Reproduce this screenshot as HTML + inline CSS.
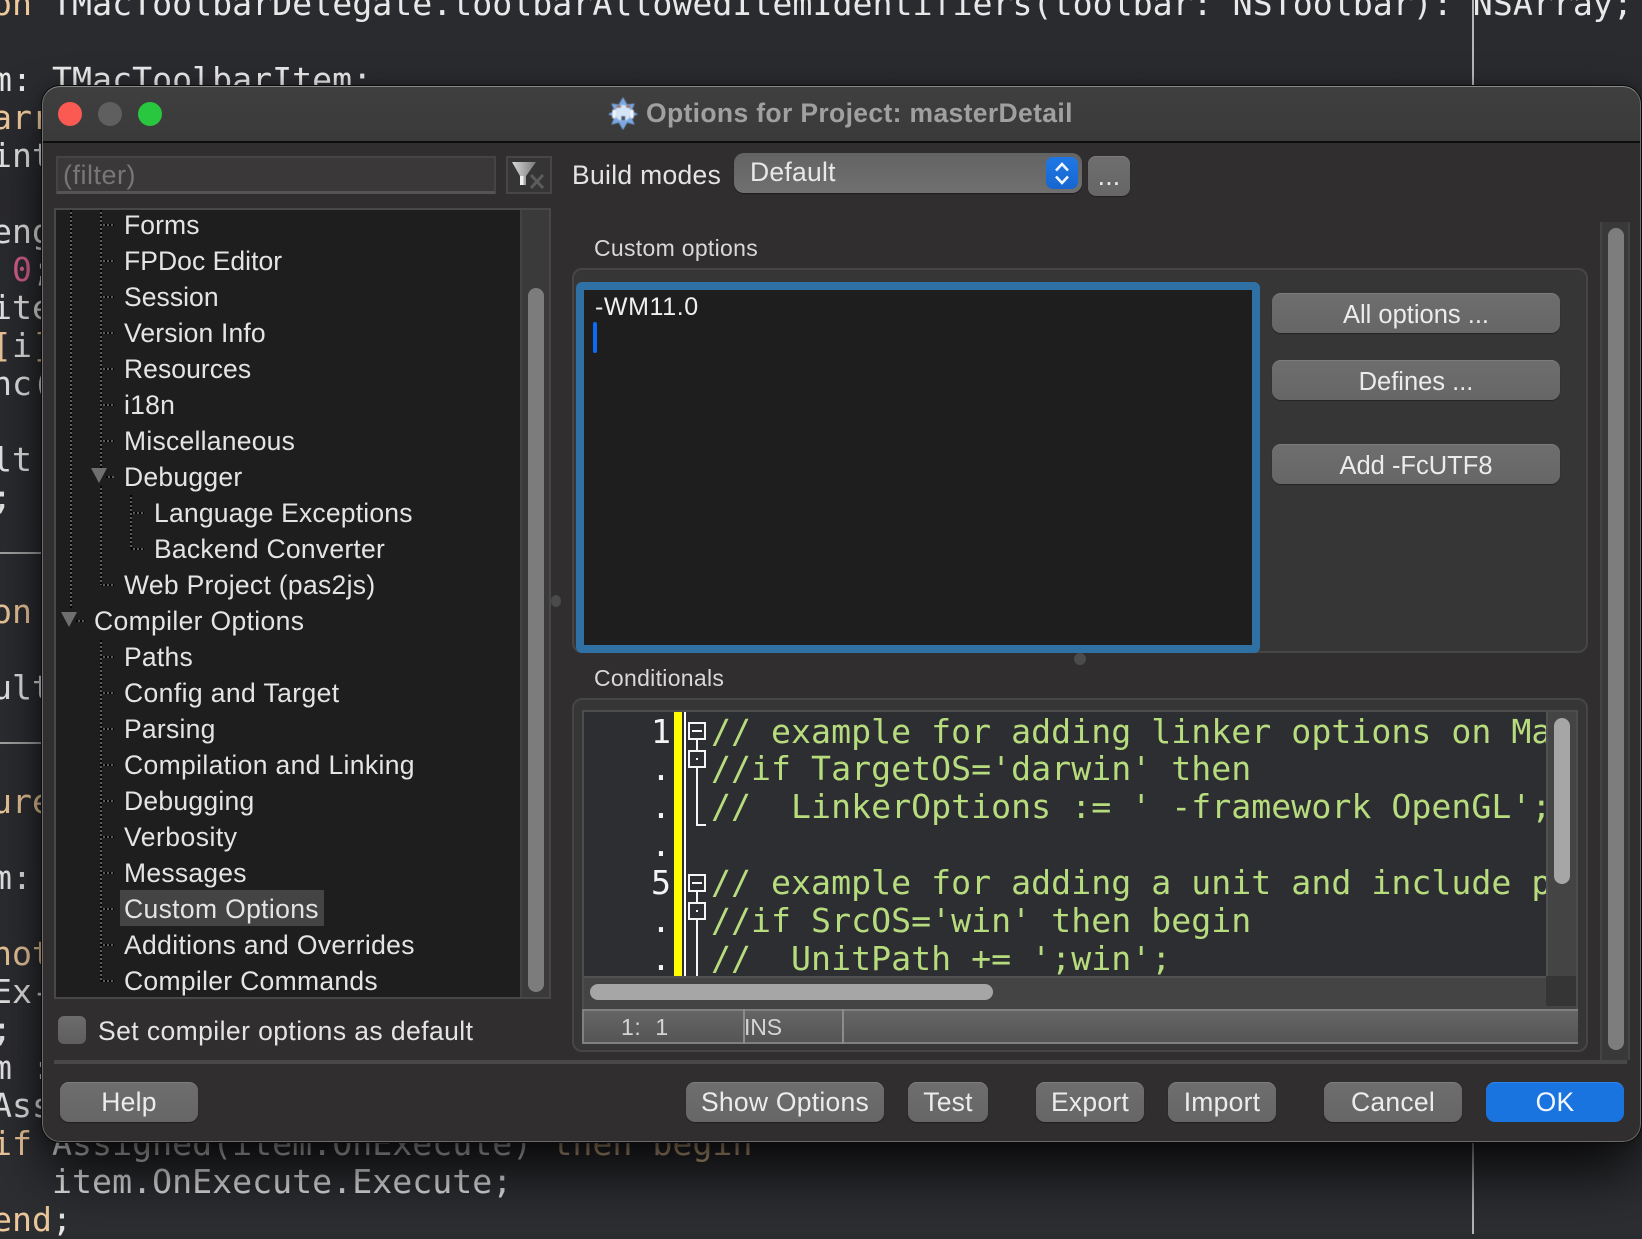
<!DOCTYPE html>
<html><head><meta charset="utf-8"><title>Options for Project: masterDetail</title>
<style>
html,body{margin:0;padding:0;width:1642px;height:1234px;overflow:hidden;background:#2b2c30}
*{box-sizing:border-box}
.a{position:absolute}
.bgc{position:absolute;left:0;top:0;width:1642px;height:1234px;background:linear-gradient(#2a2b2f,#2d2e32)}
pre{margin:0;font-family:"DejaVu Sans Mono","Liberation Mono",monospace;font-size:33.2px;letter-spacing:.03px;position:absolute}
.o{color:#efc99c}.p{color:#d9628f}
.t{position:absolute;white-space:pre;font-family:"Liberation Sans",Arial,sans-serif;font-size:26.5px;letter-spacing:.25px;color:#e4e4e4;height:36px;line-height:36px}
.btn{position:absolute;height:40px;line-height:40px;text-align:center;border-radius:9px;background:linear-gradient(#6e6e6e,#666);box-shadow:inset 0 1px 0 #7c7c7c,0 1px 1px rgba(0,0,0,.35);color:#ececec;font-family:"Liberation Sans",Arial,sans-serif;font-size:26.5px;letter-spacing:.25px;white-space:pre}
.b2{font-size:25.5px;letter-spacing:0;line-height:44px}
.grp{position:absolute;background:#363636;border:2px solid #464646;border-radius:10px}
.lab{position:absolute;white-space:pre;font-family:"Liberation Sans",Arial,sans-serif;font-size:23px;letter-spacing:.3px;color:#d9d9d9;height:30px;line-height:30px}
</style></head><body>
<div class="bgc"></div>
<pre style="left:-8px;top:-15.5px;line-height:38px;color:#e8e8e8"><span class="o">on</span> TMacToolbarDelegate.toolbarAllowedItemIdentifiers(toolbar: NSToolbar): NSArray;

m: TMacToolbarItem;
<span class="o">arr</span>
int

eng
 <span class="p">0</span>;
ite
<span class="o">[</span>i<span class="o">]</span>
nc(

lt
;


<span class="o">on</span>

ult


<span class="o">ure</span>

m:

<span class="o">not</span>
Ex-
;
m :
Ass
<span class="o">if</span> Assigned(item.OnExecute) <span class="o">then begin</span>
   item.OnExecute.Execute;
<span class="o">end</span>;</pre>
<div class="a" style="left:1472px;top:0;width:2px;height:1234px;background:#b5b5b5"></div>
<div class="a" style="left:0;top:552px;width:42px;height:2px;background:#a5a5a5"></div>
<div class="a" style="left:0;top:742px;width:42px;height:2px;background:#a5a5a5"></div>

<!-- window -->
<div class="a" style="left:42px;top:86px;width:1599px;height:1056px;border-radius:18px;background:#302e2f;box-shadow:0 0 0 1px #0b0b0b,0 34px 60px -4px rgba(0,0,0,.82),0 0 14px rgba(0,0,0,.3);overflow:hidden">
  <div class="a" style="left:0;top:0;right:0;height:57px;background:linear-gradient(#3f3f3f,#3a3a3a);border-bottom:2px solid #0d0d0d"></div>
  <div class="a" style="left:0;top:0;right:0;bottom:0;border-radius:18px;border:1.5px solid #6b6b6b;border-top-color:#8a8a8a"></div>
</div>

<!-- traffic lights -->
<div class="a" style="left:58px;top:102px;width:24px;height:24px;border-radius:50%;background:#fb5a53"></div>
<div class="a" style="left:98px;top:102px;width:24px;height:24px;border-radius:50%;background:#5f5f5f"></div>
<div class="a" style="left:138px;top:102px;width:24px;height:24px;border-radius:50%;background:#29c73f"></div>

<!-- title -->
<svg class="a" style="left:606px;top:96px" width="34" height="34" viewBox="0 0 32 32">
  <g style="filter:blur(.6px)">
  <polygon points="16,1 20,8 27,7 24,14 30,17 24,20 27,27 20,25 16,32 12,25 5,27 8,20 2,17 8,14 5,7 12,8" fill="#7ba8e2"/>
  <circle cx="16" cy="16" r="7.5" fill="#d6e4f7"/>
  <rect x="10" y="9" width="4" height="2" fill="#a06a60"/><rect x="19" y="9" width="4" height="2" fill="#a06a60"/>
  <rect x="14.5" y="19" width="3.5" height="4" fill="#44556e"/>
  <rect x="6" y="13" width="3" height="8" fill="#f3f7fd"/><rect x="23" y="13" width="3" height="8" fill="#f3f7fd"/>
  </g>
</svg>
<div class="t" style="left:646px;top:95px;font-weight:bold;font-size:26.5px;letter-spacing:.35px;color:#a0a0a0">Options for Project: masterDetail</div>

<!-- filter -->
<div class="a" style="left:56px;top:156px;width:440px;height:38px;background:#3a3839;border:2px solid #464445;border-bottom:3px solid #565556"></div>
<div class="t" style="left:63px;top:157px;color:#777;font-size:27px;letter-spacing:.5px">(filter)</div>
<div class="a" style="left:506px;top:156px;width:46px;height:38px;background:#363536;border:2px solid #484748"></div>
<svg class="a" style="left:506px;top:156px" width="46" height="38" viewBox="506 156 46 38">
  <defs><linearGradient id="f" x1="0" y1="0" x2="1" y2="0"><stop offset="0" stop-color="#d8d8d8"/><stop offset="1" stop-color="#7a7a7a"/></linearGradient></defs>
  <polygon points="512,162 536,162 526,176 526,185 520,185 520,176" fill="url(#f)"/>
  <rect x="520" y="176" width="3.5" height="9" fill="#f0f0f0"/>
  <path d="M531 175 L543 188 M543 175 L531 188" stroke="#5c5c5c" stroke-width="3" fill="none"/>
</svg>

<!-- tree -->
<div class="a" style="left:54px;top:208px;width:497px;height:791px;background:#3a3a3a;border:2px solid #484848"></div>
<div class="a" style="left:56px;top:210px;width:464px;height:787px;background:#1e1e1e"></div>
<div class="a" style="left:520px;top:210px;width:2px;height:787px;background:#434343"></div>
<div class="a" style="left:528px;top:288px;width:16px;height:704px;border-radius:8px;background:#7c7c7c"></div>
<div class="a" style="left:120px;top:890px;width:204px;height:36px;background:#444"></div>
<svg class="a" style="left:0;top:0" width="200" height="1000" viewBox="0 0 200 1000">
  <g fill="none" stroke-width="2" stroke-dasharray="2 2">
    <path stroke="#000" d="M71 210V608M101 210V468M101 486V585M131 495V548M101 640V981M101 225H114M101 261H114M101 297H114M101 333H114M101 369H114M101 405H114M101 441H114M106 477H114M131 513H144M131 549H144M101 585H114M76 621H85M101 657H114M101 693H114M101 729H114M101 765H114M101 801H114M101 837H114M101 873H114M101 909H114M101 945H114M101 981H114"/>
    <path stroke="#5a5a5a" stroke-dashoffset="2" d="M71 210V608M101 210V468M101 486V585M131 495V548M101 640V981M101 225H114M101 261H114M101 297H114M101 333H114M101 369H114M101 405H114M101 441H114M106 477H114M131 513H144M131 549H144M101 585H114M76 621H85M101 657H114M101 693H114M101 729H114M101 765H114M101 801H114M101 837H114M101 873H114M101 909H114M101 945H114M101 981H114"/>
  </g>
  <polygon points="91,468 107,468 99,483" fill="#6f6f6f"/>
  <polygon points="61,612 77,612 69,627" fill="#6f6f6f"/>
</svg>
<div class="t" style="left:124px;top:207px;letter-spacing:.1px">Forms</div>
<div class="t" style="left:124px;top:243px;letter-spacing:.05px">FPDoc Editor</div>
<div class="t" style="left:124px;top:279px;letter-spacing:.05px">Session</div>
<div class="t" style="left:124px;top:315px;letter-spacing:.15px">Version Info</div>
<div class="t" style="left:124px;top:351px;letter-spacing:.05px">Resources</div>
<div class="t" style="left:124px;top:387px">i18n</div>
<div class="t" style="left:124px;top:423px">Miscellaneous</div>
<div class="t" style="left:124px;top:459px">Debugger</div>
<div class="t" style="left:154px;top:495px;letter-spacing:.2px">Language Exceptions</div>
<div class="t" style="left:154px;top:531px;letter-spacing:.25px">Backend Converter</div>
<div class="t" style="left:124px;top:567px;letter-spacing:.3px">Web Project (pas2js)</div>
<div class="t" style="left:94px;top:603px;letter-spacing:.35px">Compiler Options</div>
<div class="t" style="left:124px;top:639px">Paths</div>
<div class="t" style="left:124px;top:675px;letter-spacing:.4px">Config and Target</div>
<div class="t" style="left:124px;top:711px">Parsing</div>
<div class="t" style="left:124px;top:747px;letter-spacing:.35px">Compilation and Linking</div>
<div class="t" style="left:124px;top:783px">Debugging</div>
<div class="t" style="left:124px;top:819px;letter-spacing:.5px">Verbosity</div>
<div class="t" style="left:124px;top:855px">Messages</div>
<div class="t" style="left:124px;top:891px;letter-spacing:.35px">Custom Options</div>
<div class="t" style="left:124px;top:927px;letter-spacing:.35px">Additions and Overrides</div>
<div class="t" style="left:124px;top:963px;letter-spacing:.3px">Compiler Commands</div>

<!-- checkbox -->
<div class="a" style="left:58px;top:1016px;width:28px;height:28px;border-radius:6px;background:linear-gradient(#6c6c6c,#5e5e5e)"></div>
<div class="t" style="left:98px;top:1013px;letter-spacing:.42px">Set compiler options as default</div>

<!-- build modes -->
<div class="t" style="left:572px;top:157px;letter-spacing:.3px">Build modes</div>
<div class="a" style="left:734px;top:153px;width:348px;height:40px;border-radius:10px;background:linear-gradient(#636363,#707070);box-shadow:0 1px 1px rgba(0,0,0,.4)"></div>
<div class="t" style="left:750px;top:154px;color:#e8e8e8">Default</div>
<div class="a" style="left:1046px;top:157px;width:32px;height:32px;border-radius:7px;background:linear-gradient(#1f78e6,#1766cf)"></div>
<svg class="a" style="left:1046px;top:157px" width="32" height="32" viewBox="1046 157 32 32">
  <path d="M1056 170.5L1062 164L1068 170.5M1056 176.5L1062 183L1068 176.5" fill="none" stroke="#f2f6fc" stroke-width="2.6"/>
</svg>
<div class="btn" style="left:1088px;top:156px;width:42px;border-radius:8px">...</div>

<!-- right scrollbar -->
<div class="a" style="left:1600px;top:222px;width:30px;height:838px;background:#3a3939;border-left:2px solid #454445;border-right:2px solid #454445"></div>
<div class="a" style="left:1608px;top:228px;width:16px;height:822px;border-radius:8px;background:#7d7d7d"></div>

<!-- custom options group -->
<div class="lab" style="left:594px;top:233px">Custom options</div>
<div class="grp" style="left:572px;top:268px;width:1016px;height:385px"></div>
<div class="a" style="left:576px;top:282px;width:684px;height:371px;background:#1e1e1e;border:8px solid #2f71a5;border-radius:6px"></div>
<div class="t" style="left:595px;top:289px;font-size:25px;letter-spacing:.6px;color:#f0f0f0">-WM11.0</div>
<div class="a" style="left:593px;top:322px;width:4px;height:31px;border-radius:2px;background:#0a6cf5"></div>
<div class="btn b2" style="left:1272px;top:293px;width:288px">All options ...</div>
<div class="btn b2" style="left:1272px;top:360px;width:288px">Defines ...</div>
<div class="btn b2" style="left:1272px;top:444px;width:288px">Add -FcUTF8</div>
<div class="a" style="left:1074px;top:653px;width:12px;height:12px;border-radius:50%;background:#4b4b4b"></div>
<div class="a" style="left:551px;top:595px;width:10px;height:12px;border-radius:50%;background:#4b4b4b"></div>

<!-- conditionals group -->
<div class="lab" style="left:594px;top:663px">Conditionals</div>
<div class="grp" style="left:572px;top:698px;width:1016px;height:354px"></div>
<div class="a" style="left:582px;top:710px;width:996px;height:299px;background:#454445;border:2px solid #4e4d4e;border-bottom:0"></div>
<div class="a" style="left:584px;top:712px;width:962px;height:264px;background:#2d2e32;overflow:hidden">
  <pre style="left:47px;top:.5px;width:40px;text-align:right;line-height:37.9px;color:#f4f4f4">1
.
.
.
5
.
.</pre>
  <div class="a" style="left:90px;top:0;width:8px;height:264px;background:#ffff00"></div>
  <div class="a" style="left:100px;top:0;width:2px;height:264px;background:#fff"></div>
  <svg class="a" style="left:0;top:0" width="140" height="264" viewBox="584 712 140 264">
    <g fill="none" stroke="#f5f5f5" stroke-width="2">
      <rect x="689" y="723" width="16" height="16"/><path d="M692 731H702" />
      <rect x="689" y="751" width="16" height="16"/><path d="M696 759H698"/>
      <path d="M697 739V751M697 767V825H706"/>
      <rect x="689" y="875" width="16" height="16"/><path d="M692 883H702"/>
      <rect x="689" y="903" width="16" height="16"/><path d="M696 911H698"/>
      <path d="M697 891V903M697 919V976"/>
    </g>
  </svg>
  <pre style="left:127px;top:.5px;line-height:37.9px;color:#b7dc7d">// example for adding linker options on Mac
//if TargetOS='darwin' then
//  LinkerOptions := ' -framework OpenGL';

// example for adding a unit and include path
//if SrcOS='win' then begin
//  UnitPath += ';win';</pre>
</div>
<div class="a" style="left:1546px;top:712px;width:2px;height:294px;background:#525152"></div>
<div class="a" style="left:584px;top:976px;width:962px;height:2px;background:#525152"></div>
<div class="a" style="left:1546px;top:976px;width:30px;height:30px;background:#353535"></div>
<div class="a" style="left:1554px;top:718px;width:16px;height:166px;border-radius:8px;background:#a6a6a6"></div>
<div class="a" style="left:590px;top:984px;width:403px;height:16px;border-radius:8px;background:#a6a6a6"></div>
<div class="a" style="left:582px;top:1009px;width:996px;height:35px;background:linear-gradient(#656565,#555);border-top:2px solid #808080;border-bottom:2px solid #808080;border-left:2px solid #808080"></div>
<div class="a" style="left:743px;top:1009px;width:2px;height:35px;background:#8c8c8c"></div>
<div class="a" style="left:842px;top:1009px;width:2px;height:35px;background:#8c8c8c"></div>
<div class="t" style="left:621px;top:1009px;font-size:23px;letter-spacing:.6px;color:#d5d5d5">1:  1</div>
<div class="t" style="left:744px;top:1009px;font-size:23px;letter-spacing:-.1px;color:#d5d5d5">INS</div>

<!-- separator -->
<div class="a" style="left:54px;top:1060px;width:1573px;height:4px;background:#484848"></div>

<!-- bottom buttons -->
<div class="btn" style="left:60px;top:1082px;width:138px">Help</div>
<div class="btn" style="left:686px;top:1082px;width:198px">Show Options</div>
<div class="btn" style="left:908px;top:1082px;width:80px">Test</div>
<div class="btn" style="left:1036px;top:1082px;width:108px">Export</div>
<div class="btn" style="left:1168px;top:1082px;width:108px">Import</div>
<div class="btn" style="left:1324px;top:1082px;width:138px">Cancel</div>
<div class="btn" style="left:1486px;top:1082px;width:138px;background:#1a74e0;box-shadow:inset 0 1px 0 #2f86ea;color:#f4f8fe">OK</div>
</body></html>
